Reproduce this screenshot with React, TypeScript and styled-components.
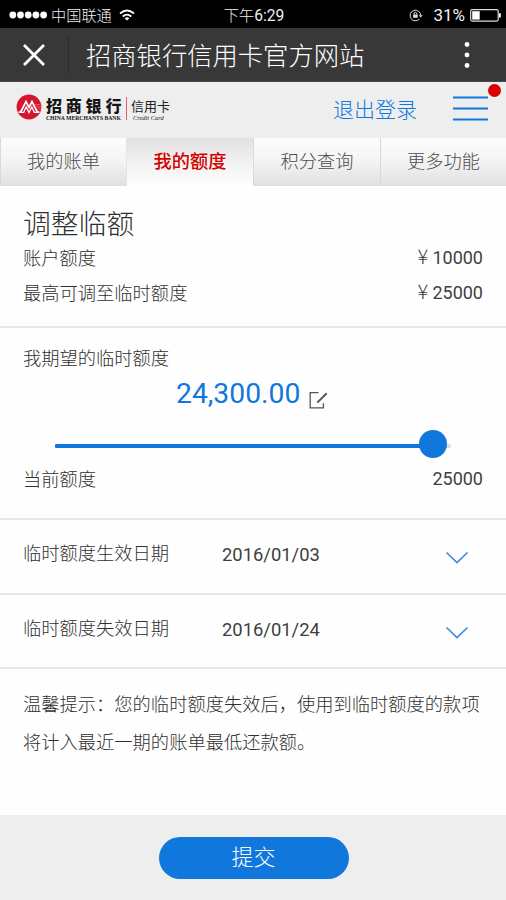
import React from "react";
import styled, { createGlobalStyle, css } from "styled-components";

const BLUE = "#1078dc";
const SANS = `Roboto, "Noto Sans CJK SC", sans-serif`;

const GlobalStyle = createGlobalStyle`
  *, *::before, *::after { box-sizing: border-box; }
  body { margin: 0; background: #fefefe; }
`;

const Page = styled.div`
  width: 506px;
  height: 900px;
  display: flex;
  flex-direction: column;
  overflow: hidden;
  background: #fefefe;
  color: #303030;
  font-family: ${SANS};
  font-size: 18.28px;
  font-weight: 300;
  white-space: nowrap;
`;

const StatusBar = styled.div`
  height: 28px;
  display: grid;
  grid-template-columns: 1fr auto 1fr;
  align-items: center;
  padding: 2px 5px 0 9px;
  background: #000;
  color: #f0f0f0;
  font-size: 15.2px;
  line-height: 26px;
`;

const StatusGroup = styled.div<{ $end?: boolean }>`
  display: flex;
  align-items: center;
  justify-content: ${(p) => (p.$end ? "flex-end" : "flex-start")};
  svg { display: block; flex: none; margin-top: -1px; }
`;

const Carrier = styled.span`
  margin: 1px 7px 0 4px;
`;

const Clock = styled.span`
  font-size: 15.2px;
  margin: 1px 2px 0 0;
  b { font-weight: 400; font-size: 15.6px; }
`;

const Battery = styled.span`
  font-size: 17px;
  font-weight: 400;
  margin: -1px 5px 0 10px;
`;

const TitleBar = styled.div`
  height: 54px;
  display: flex;
  align-items: center;
  background: #383838;
  border-bottom: 1px solid #4b4849;
  color: #fff;
  svg { display: block; }
`;

const CloseButton = styled.button`
  width: 69px;
  height: 36px;
  padding: 0 0 0 22px;
  border: 0;
  border-right: 1px solid #2b2b2b;
  background: none;
`;

const PageTitle = styled.h1`
  flex: 1;
  margin: 4px 0 0;
  padding-left: 17px;
  font-size: 25.3px;
  font-weight: 300;
  line-height: 50px;
`;

const MoreButton = styled.button`
  width: 78px;
  padding: 0 0 0 36px;
  border: 0;
  background: none;
`;

const BrandBar = styled.header`
  height: 56px;
  display: flex;
  align-items: center;
  padding: 0 18px 0 16px;
  background: #eee;
`;

const LogoMark = styled.svg`
  display: block;
  margin: -6px 4px 0 0;
`;

const BankName = styled.div`
  display: flex;
  flex-direction: column;
  width: 77px;
  margin-top: -3px;
  color: #151515;
`;

const BankChinese = styled.span`
  height: 18px;
  font-family: "Noto Sans CJK SC", sans-serif;
  font-size: 16px;
  font-weight: 900;
  line-height: 18px;
  letter-spacing: 3.8px;
  margin-right: -4px;
`;

const BankEnglish = styled.span`
  font-family: "Liberation Serif", serif;
  font-size: 5.7px;
  font-weight: 700;
  line-height: 8px;
`;

const CardName = styled.div`
  display: flex;
  flex-direction: column;
  height: 23px;
  margin: -4px 0 0 3px;
  padding-left: 4px;
  border-left: 1px solid #e2606b;
  color: #222;
  font-family: "Noto Sans CJK SC", sans-serif;
  font-size: 13px;
  font-weight: 400;
  line-height: 17px;
  em {
    font: italic 6.4px/7px "Liberation Serif", serif;
    padding-left: 2px;
  }
`;

const Logout = styled.a`
  margin-left: auto;
  color: ${BLUE};
  font-size: 21px;
  line-height: 50px;
`;

const MenuButton = styled.button`
  position: relative;
  width: 35px;
  height: 25px;
  margin: -3px 0 0 36px;
  padding: 0;
  border: 0;
  background: none;
  svg { display: block; }
`;

const Dot = styled.i`
  position: absolute;
  top: -12px;
  right: -13px;
  width: 13px;
  height: 13px;
  border-radius: 50%;
  background: #d90000;
`;

const Tabs = styled.nav`
  height: 48px;
  display: grid;
  grid-template-columns: 126px 127px 127px 126px;
`;

const Tab = styled.a<{ $active?: boolean }>`
  text-align: center;
  line-height: 47px;
  font-size: 18.2px;
  color: #4c4c4c;
  border-left: 1px solid #d9d9d9;
  background: linear-gradient(#fdfdfd, #f3f3f3 50%, #e0e0e0);
  ${(p) =>
    p.$active &&
    css`
      color: #d40000;
      font-weight: 500;
      border-color: #e4e4e4;
      background: linear-gradient(#e1e1e1, #f1f1f1 50%, #fefefe);
    `}
`;

const Section = styled.section<{ $height: number; $top: number }>`
  height: ${(p) => p.$height}px;
  padding: ${(p) => p.$top}px 23px 0;
  border-bottom: 2px solid #e8e8e8;
`;

const Heading = styled.h2`
  height: 34px;
  margin: 0;
  font-size: 27.8px;
  font-weight: 300;
  line-height: 36px;
`;

const Line = styled.div`
  display: flex;
  justify-content: space-between;
  height: 35px;
  line-height: 35px;
`;

const Figure = styled.span`
  color: #3f3f3f;
  font-weight: 400;
  font-size: 18px;
  line-height: 34px;
`;

const Yen = styled.span`
  display: inline-block;
  width: 15px;
  font: 300 20px/20px "Noto Sans CJK SC", sans-serif;
`;

const Amount = styled.div`
  display: flex;
  align-items: center;
  height: 36px;
  padding-left: 153px;
  color: ${BLUE};
  font-size: 28.3px;
  font-weight: 400;
  line-height: 36px;
  svg { display: block; margin: 11px 0 0 9px; }
`;

const Slider = styled.div`
  height: 50px;
  display: flex;
  align-items: center;
  padding: 18px 32px 0;
`;

const Track = styled.div`
  position: relative;
  width: 396px;
  height: 4px;
  border-radius: 2px;
  background: #dcdcdc;
`;

const Fill = styled.div`
  width: 378px;
  height: 4px;
  border-radius: 1px;
  background: ${BLUE};
`;

const Knob = styled.div`
  position: absolute;
  left: 364px;
  top: -14px;
  width: 28px;
  height: 28px;
  border-radius: 50%;
  background: ${BLUE};
`;

const DateRow = styled.div<{ $height: number }>`
  height: ${(p) => p.$height}px;
  display: grid;
  grid-template-columns: 199px 1fr auto;
  align-items: start;
  padding: 16px 37px 0 23px;
  line-height: 36px;
  border-bottom: 2px solid #e8e8e8;
  svg { display: block; margin-top: 15px; }
`;

const DateValue = styled.span`
  color: #3f3f3f;
  font-weight: 400;
  font-size: 18.4px;
  line-height: 38px;
`;

const Notice = styled.p`
  flex: 1;
  margin: 0;
  padding: 15px 20px 0 23px;
  line-height: 38px;
  font-family: "Noto Sans CJK SC", sans-serif;
`;

const Footer = styled.footer`
  height: 85px;
  display: flex;
  justify-content: center;
  padding: 22px 0 0 2px;
  background: #eee;
`;

const Submit = styled.button`
  width: 190px;
  height: 42px;
  padding: 0 1px 0 0;
  border: 0;
  border-radius: 21px;
  background: ${BLUE};
  color: #fff;
  font: 300 22px/42px ${SANS};
`;

const Chevron = () => (
  <svg width="24" height="13" viewBox="0 0 24 13" fill="none" stroke="#3b8de0" strokeWidth="1.7">
    <path d="M1.5 1.5 12 11.5 22.5 1.5" />
  </svg>
);

const dates = [
  { label: "临时额度生效日期", value: "2016/01/03", height: 75 },
  { label: "临时额度失效日期", value: "2016/01/24", height: 74 },
];

export default function App() {
  return (
    <>
      <GlobalStyle />
      <Page>
        <StatusBar>
          <StatusGroup>
            <svg width="38" height="8" fill="#fff">
              {[0, 1, 2, 3, 4].map((i) => (
                <circle key={i} cx={3.8 + i * 7.7} cy="4" r="3.4" />
              ))}
            </svg>
            <Carrier>中国联通</Carrier>
            <svg width="16" height="13" viewBox="0 0 16 13" fill="none" stroke="#fff" strokeWidth="1.8">
              <path d="M1 4.5Q8-1.5 15 4.5M3.7 7.5Q8 3.8 12.3 7.5" />
              <path d="M8 11.6 5.6 9.3Q8 7.4 10.4 9.3Z" fill="#fff" stroke="none" />
            </svg>
          </StatusGroup>
          <Clock>
            下午<b>6:29</b>
          </Clock>
          <StatusGroup $end>
            <svg width="14" height="13" viewBox="0 0 14 13" fill="none" stroke="#ddd">
              <path d="M10.4 10A5.3 5.3 0 1 1 11.7 6.4" />
              <path d="M9.7 6.2h4l-2 2.4z" fill="#ddd" stroke="none" />
              <path d="M5 6V4.8a1.4 1.4 0 0 1 2.8 0V6" />
              <path d="M4.1 5.6h4.6v3.2H4.1z" fill="#ddd" stroke="none" />
            </svg>
            <Battery>31%</Battery>
            <svg width="31" height="13" viewBox="0 0 31 13">
              <rect x=".7" y=".7" width="27.5" height="11.4" rx="1.5" fill="none" stroke="#ddd" strokeWidth="1.2" />
              <rect x="2.2" y="2.2" width="7.5" height="8.4" fill="#fff" />
              <rect x="29" y="4.3" width="1.8" height="4.2" fill="#fff" />
            </svg>
          </StatusGroup>
        </StatusBar>

        <TitleBar>
          <CloseButton aria-label="关闭">
            <svg width="24" height="24" viewBox="0 0 24 24" stroke="#fff" strokeWidth="2.8">
              <path d="m2 2 20 20M22 2 2 22" />
            </svg>
          </CloseButton>
          <PageTitle>招商银行信用卡官方网站</PageTitle>
          <MoreButton aria-label="更多">
            <svg width="6" height="28" fill="#fff">
              <circle cx="3" cy="3.5" r="2.4" />
              <circle cx="3" cy="14" r="2.4" />
              <circle cx="3" cy="24.5" r="2.4" />
            </svg>
          </MoreButton>
        </TitleBar>

        <BrandBar>
          <LogoMark width="26" height="26" viewBox="0 0 26 26">
            <circle cx="13" cy="13" r="12.4" fill="#d4152f" />
            <path
              d="M2.6 18.2h2L10 7.6l3 5.8 3-5.8 5.4 10.6h2"
              fill="none"
              stroke="#fff"
              strokeWidth="1.8"
            />
            <path
              d="M7.6 18.6 10.2 13l2.8 5.6 2.8-5.6 2.6 5.6M4 18.4h4.4M17.6 18.4H22"
              fill="none"
              stroke="#fff"
              strokeWidth="1.3"
            />
            <path d="M19.4 10.5h5M20.4 12.7h4.6M21.4 14.9h3.4" stroke="#e9808c" strokeWidth=".7" />
          </LogoMark>
          <BankName>
            <BankChinese>招商银行</BankChinese>
            <BankEnglish>CHINA MERCHANTS BANK</BankEnglish>
          </BankName>
          <CardName>
            信用卡
            <em>Credit Card</em>
          </CardName>
          <Logout>退出登录</Logout>
          <MenuButton aria-label="菜单">
            <svg width="35" height="25" stroke={BLUE} strokeWidth="2">
              <path d="M0 1.5h35M0 12.5h35M0 23.5h35" />
            </svg>
            <Dot />
          </MenuButton>
        </BrandBar>

        <Tabs>
          <Tab>我的账单</Tab>
          <Tab $active>我的额度</Tab>
          <Tab>积分查询</Tab>
          <Tab>更多功能</Tab>
        </Tabs>

        <Section $height={142} $top={21}>
          <Heading>调整临额</Heading>
          <Line>
            <span>账户额度</span>
            <Figure><Yen>¥</Yen>10000</Figure>
          </Line>
          <Line>
            <span>最高可调至临时额度</span>
            <Figure><Yen>¥</Yen>25000</Figure>
          </Line>
        </Section>

        <Section $height={192} $top={13}>
          <Line>我期望的临时额度</Line>
          <Amount>
            24,300.00
            <svg width="19" height="18" viewBox="0 0 19 18" fill="none" stroke="#555" strokeWidth="1.3">
              <path d="M9.5 1.6H1.2v15.2h13.2v-4.5" />
              <path d="m8.3 11.6 9.4-9.4" strokeWidth="2" />
            </svg>
          </Amount>
          <Slider>
            <Track>
              <Fill />
              <Knob />
            </Track>
          </Slider>
          <Line>
            <span>当前额度</span>
            <Figure>25000</Figure>
          </Line>
        </Section>

        {dates.map((d) => (
          <DateRow key={d.label} $height={d.height}>
            <span>{d.label}</span>
            <DateValue>{d.value}</DateValue>
            <Chevron />
          </DateRow>
        ))}

        <Notice>
          温馨提示：您的临时额度失效后，使用到临时额度的款项
          <br />
          将计入最近一期的账单最低还款额。
        </Notice>

        <Footer>
          <Submit>提交</Submit>
        </Footer>
      </Page>
    </>
  );
}
